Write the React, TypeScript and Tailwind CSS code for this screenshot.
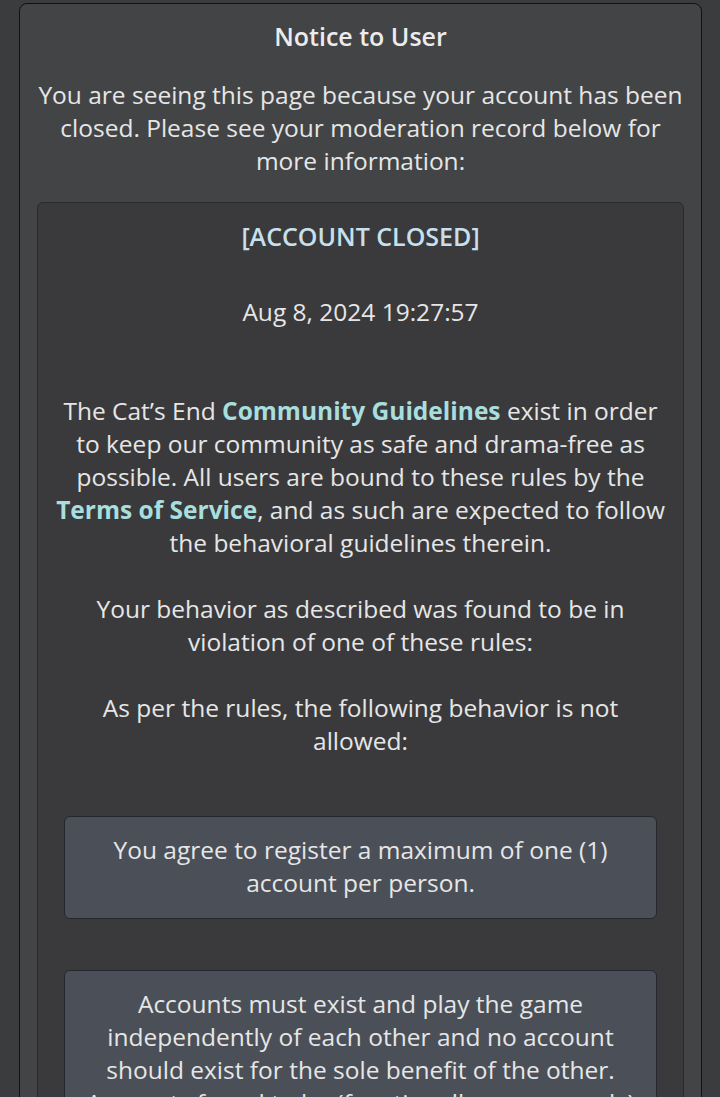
import React from 'react';

const rules = [
  'You agree to register a maximum of one (1) account per person.',
  'Accounts must exist and play the game independently of each other and no account should exist for the sole benefit of the other. Accounts found to be (functionally or purposely) linked may be closed.',
];

export default function App() {
  return (
    <div
      className="min-h-screen bg-[#3b3c3e] pl-[19px] pr-[18px] pt-[3px] text-[#e6e6e6]"
      style={{ fontFamily: '"Open Sans", "Liberation Sans", sans-serif' }}
    >
      <div className="rounded-lg border border-[#111111] bg-[#434446] px-[17px] pb-6 pt-[16px] text-center">
        <h1 className="text-[25px] leading-[32px] font-semibold text-[#ececec]">Notice to User</h1>
        <p className="mt-[26px] text-[24.5px] leading-[33px]">
          You are seeing this page because your account has been closed. Please see your moderation record below
          for more information:
        </p>

        <div className="mt-[25px] rounded-md border border-[#2a2a2b] bg-[#3a3a3c] px-[16px] pb-10 pt-[17px]">
          <h2 className="text-[25px] leading-[32px] font-semibold text-[#c8e0ee]">[ACCOUNT CLOSED]</h2>
          <p className="mt-[43px] text-[24.5px] leading-[33px]">Aug 8, 2024 19:27:57</p>

          <p className="mt-[66px] text-[24.5px] leading-[33px]">
            The Cat’s End <span className="font-bold text-[#a9dede]">Community Guidelines</span> exist in order to
            keep our community as safe and drama-free as possible. All users are bound to these rules by the{' '}
            <span className="font-bold text-[#a9dede]">Terms of Service</span>, and as such are expected to follow
            the behavioral guidelines therein.
          </p>
          <p className="mt-[33px] text-[24.5px] leading-[33px]">
            Your behavior as described was found to be in violation of one of these rules:
          </p>
          <p className="mt-[33px] text-[24.5px] leading-[33px]">
            As per the rules, the following behavior is not allowed:
          </p>

          <div className="mt-[59px] flex flex-col gap-[51px] px-[10px]">
            {rules.map((r) => (
              <div
                key={r}
                className="rounded-md border border-[#24272d] bg-[#4a4f58] px-[20px] pb-[19px] pt-[16px] text-[24.5px] leading-[33px]"
              >
                {r}
              </div>
            ))}
          </div>
        </div>
      </div>
    </div>
  );
}
